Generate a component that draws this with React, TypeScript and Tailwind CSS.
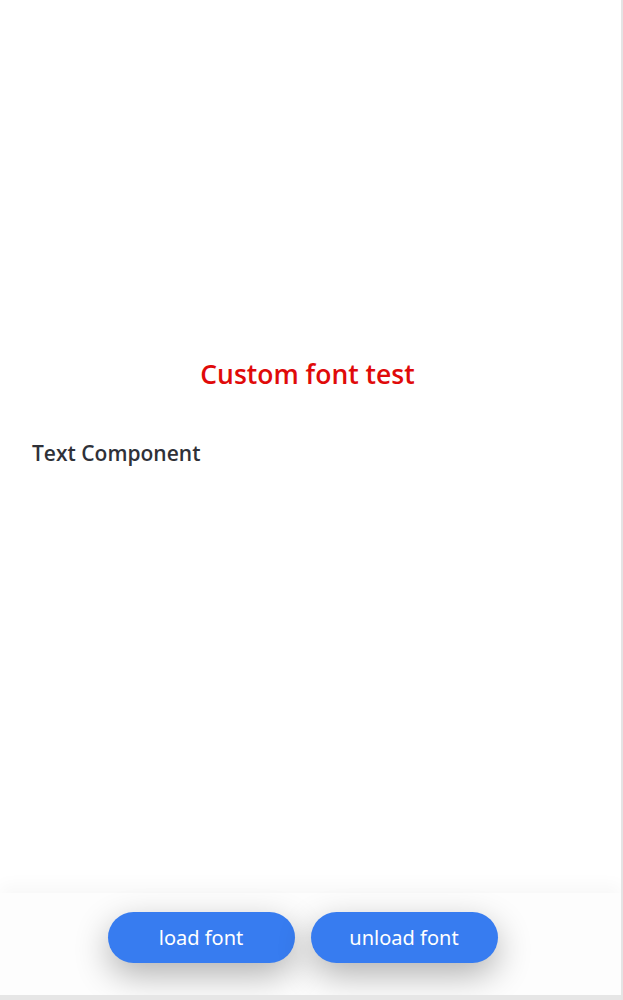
export default function App() {
  return (
    <div className="flex h-[1000px] w-full overflow-hidden bg-white">
      <div className="flex w-[621px] flex-col">
        {/* Page content */}
        <div className="flex-1 bg-white px-8 pt-[356px]">
          <h1
            className="pr-[6px] text-center text-[26.5px] leading-[36px] font-semibold text-[#e00a0a]"
            style={{ fontFamily: '"Open Sans", sans-serif' }}
          >
            Custom font test
          </h1>
          <p
            className="mt-[46px] text-[21px] leading-[30px] font-semibold text-[#2f3138]"
            style={{ fontFamily: '"Open Sans", sans-serif' }}
          >
            Text Component
          </p>
        </div>

        {/* Bottom action bar */}
        <div className="flex h-[102px] items-start justify-center gap-4 bg-[#fdfdfd] pt-[19px] pr-4 shadow-[0_-8px_16px_rgba(0,0,0,0.03)]">
          <button
            type="button"
            className="h-[51px] w-[187px] rounded-full bg-[#377cf0] text-[20px] text-white shadow-[0_12px_34px_rgba(0,0,0,0.3)]"
            style={{ fontFamily: '"Noto Sans", sans-serif' }}
          >
            load font
          </button>
          <button
            type="button"
            className="h-[51px] w-[187px] rounded-full bg-[#377cf0] text-[20px] text-white shadow-[0_12px_34px_rgba(0,0,0,0.3)]"
            style={{ fontFamily: '"Noto Sans", sans-serif' }}
          >
            unload font
          </button>
        </div>
        <div className="h-[5px] bg-[#e6e6e6]" />
      </div>
      <div className="w-[2px] bg-[#e4e4e4]" />
    </div>
  );
}
